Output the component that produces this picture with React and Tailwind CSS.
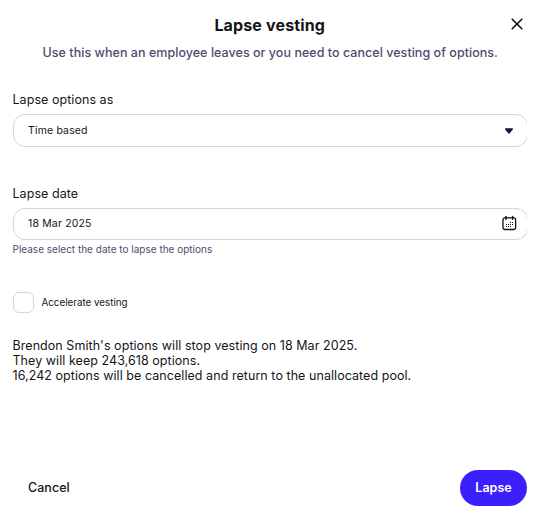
import React from 'react';

function CalendarIcon() {
  return (
    <svg className="mb-[3px]" width="16" height="16" viewBox="0 0 16 16" fill="none" stroke="#111" strokeLinecap="round">
      <rect x="2" y="2.9" width="12.6" height="11.6" rx="1.8" strokeWidth="1.3" />
      <path d="M5 1.4v2.8M11.6 1.4v2.8" strokeWidth="1.5" />
      <g fill="#111" stroke="none">
        <path d="M9 7h1v1h-1zM11 7h1v1h-1z" />
        <path d="M5 9h1v1h-1zM7 9h1v1h-1zM9 9h1v1h-1zM11 9h1v1h-1z" />
        <path d="M5 11h1v1h-1zM7 11h1v1h-1zM9 11h1v1h-1z" />
      </g>
    </svg>
  );
}

function CaretIcon() {
  return (
    <svg width="16" height="6" viewBox="0 0 16 6">
      <path d="M4.7 1h6.6L8 5z" fill="#1b1437" stroke="#1b1437" strokeWidth="1.4" strokeLinejoin="round" />
    </svg>
  );
}

function Field({ label, value, icon, height }) {
  return (
    <div>
      <div className="text-[12.5px] leading-4 tracking-[0.05px]">{label}</div>
      <div className="mt-[6px] overflow-hidden">
        <div className={`flex ${height} ml-[0.5px] w-[515px] items-center justify-between rounded-[12px] border border-[#d5d4df] pl-[14px] pr-[10px] text-[10.5px] tracking-[0.16px]`}>
          <span>{value}</span>
          {icon}
        </div>
      </div>
    </div>
  );
}

export default function App() {
  return (
    <div className="flex h-[516px] w-[537px] flex-col overflow-hidden bg-white pl-[12.5px] pr-[10px] font-['Inter',sans-serif] text-[#151518]">
      <header className="relative pt-[15px] text-center">
        <h1 className="text-[16px] font-bold leading-5 tracking-[0.15px]">Lapse vesting</h1>
        <p className="mt-[10px] whitespace-nowrap pl-px text-[12.5px] font-medium leading-4 tracking-[0.04px] text-[#504b6e]">
          Use this when an employee leaves or you need to cancel vesting of options.
        </p>
        <button aria-label="Close" className="absolute right-[4px] top-[18px]">
          <svg width="12" height="12" viewBox="0 0 12 12" stroke="#111" strokeWidth="1.6" strokeLinecap="round">
            <path d="M1.2 1.2l9.6 9.6M10.8 1.2L1.2 10.8" />
          </svg>
        </button>
      </header>
      <div className="mt-[31px]">
        <Field label="Lapse options as" value="Time based" height="h-[33px]" icon={<CaretIcon />} />
      </div>
      <div className="mt-[39px]">
        <Field label="Lapse date" value="18 Mar 2025" height="h-[32px]" icon={<CalendarIcon />} />
        <p className="mt-px text-[10px] leading-4 text-[#504b6e]">Please select the date to lapse the options</p>
      </div>
      <label className="mt-[35px] flex items-center text-[9.8px]">
        <span className="ml-[0.5px] mr-[7.5px] h-[21px] w-[21px] rounded-[6px] border border-[#d5d4df]" />
        <span className="pt-px">Accelerate vesting</span>
      </label>
      <div className="mt-[25px] text-[12.5px] leading-[15px] tracking-[0.055px]">
        <p>Brendon Smith's options will stop vesting on 18 Mar 2025.</p>
        <p>They will keep 243,618 options.</p>
        <p>16,242 options will be cancelled and return to the unallocated pool.</p>
      </div>
      <footer className="mt-auto mb-[10px] flex items-center justify-between pl-[15.5px] text-[12.5px]">
        <button className="font-medium tracking-[0.05px]">Cancel</button>
        <button className="h-[36px] w-[67px] rounded-full bg-[#3b1ffc] font-semibold text-white">Lapse</button>
      </footer>
    </div>
  );
}
